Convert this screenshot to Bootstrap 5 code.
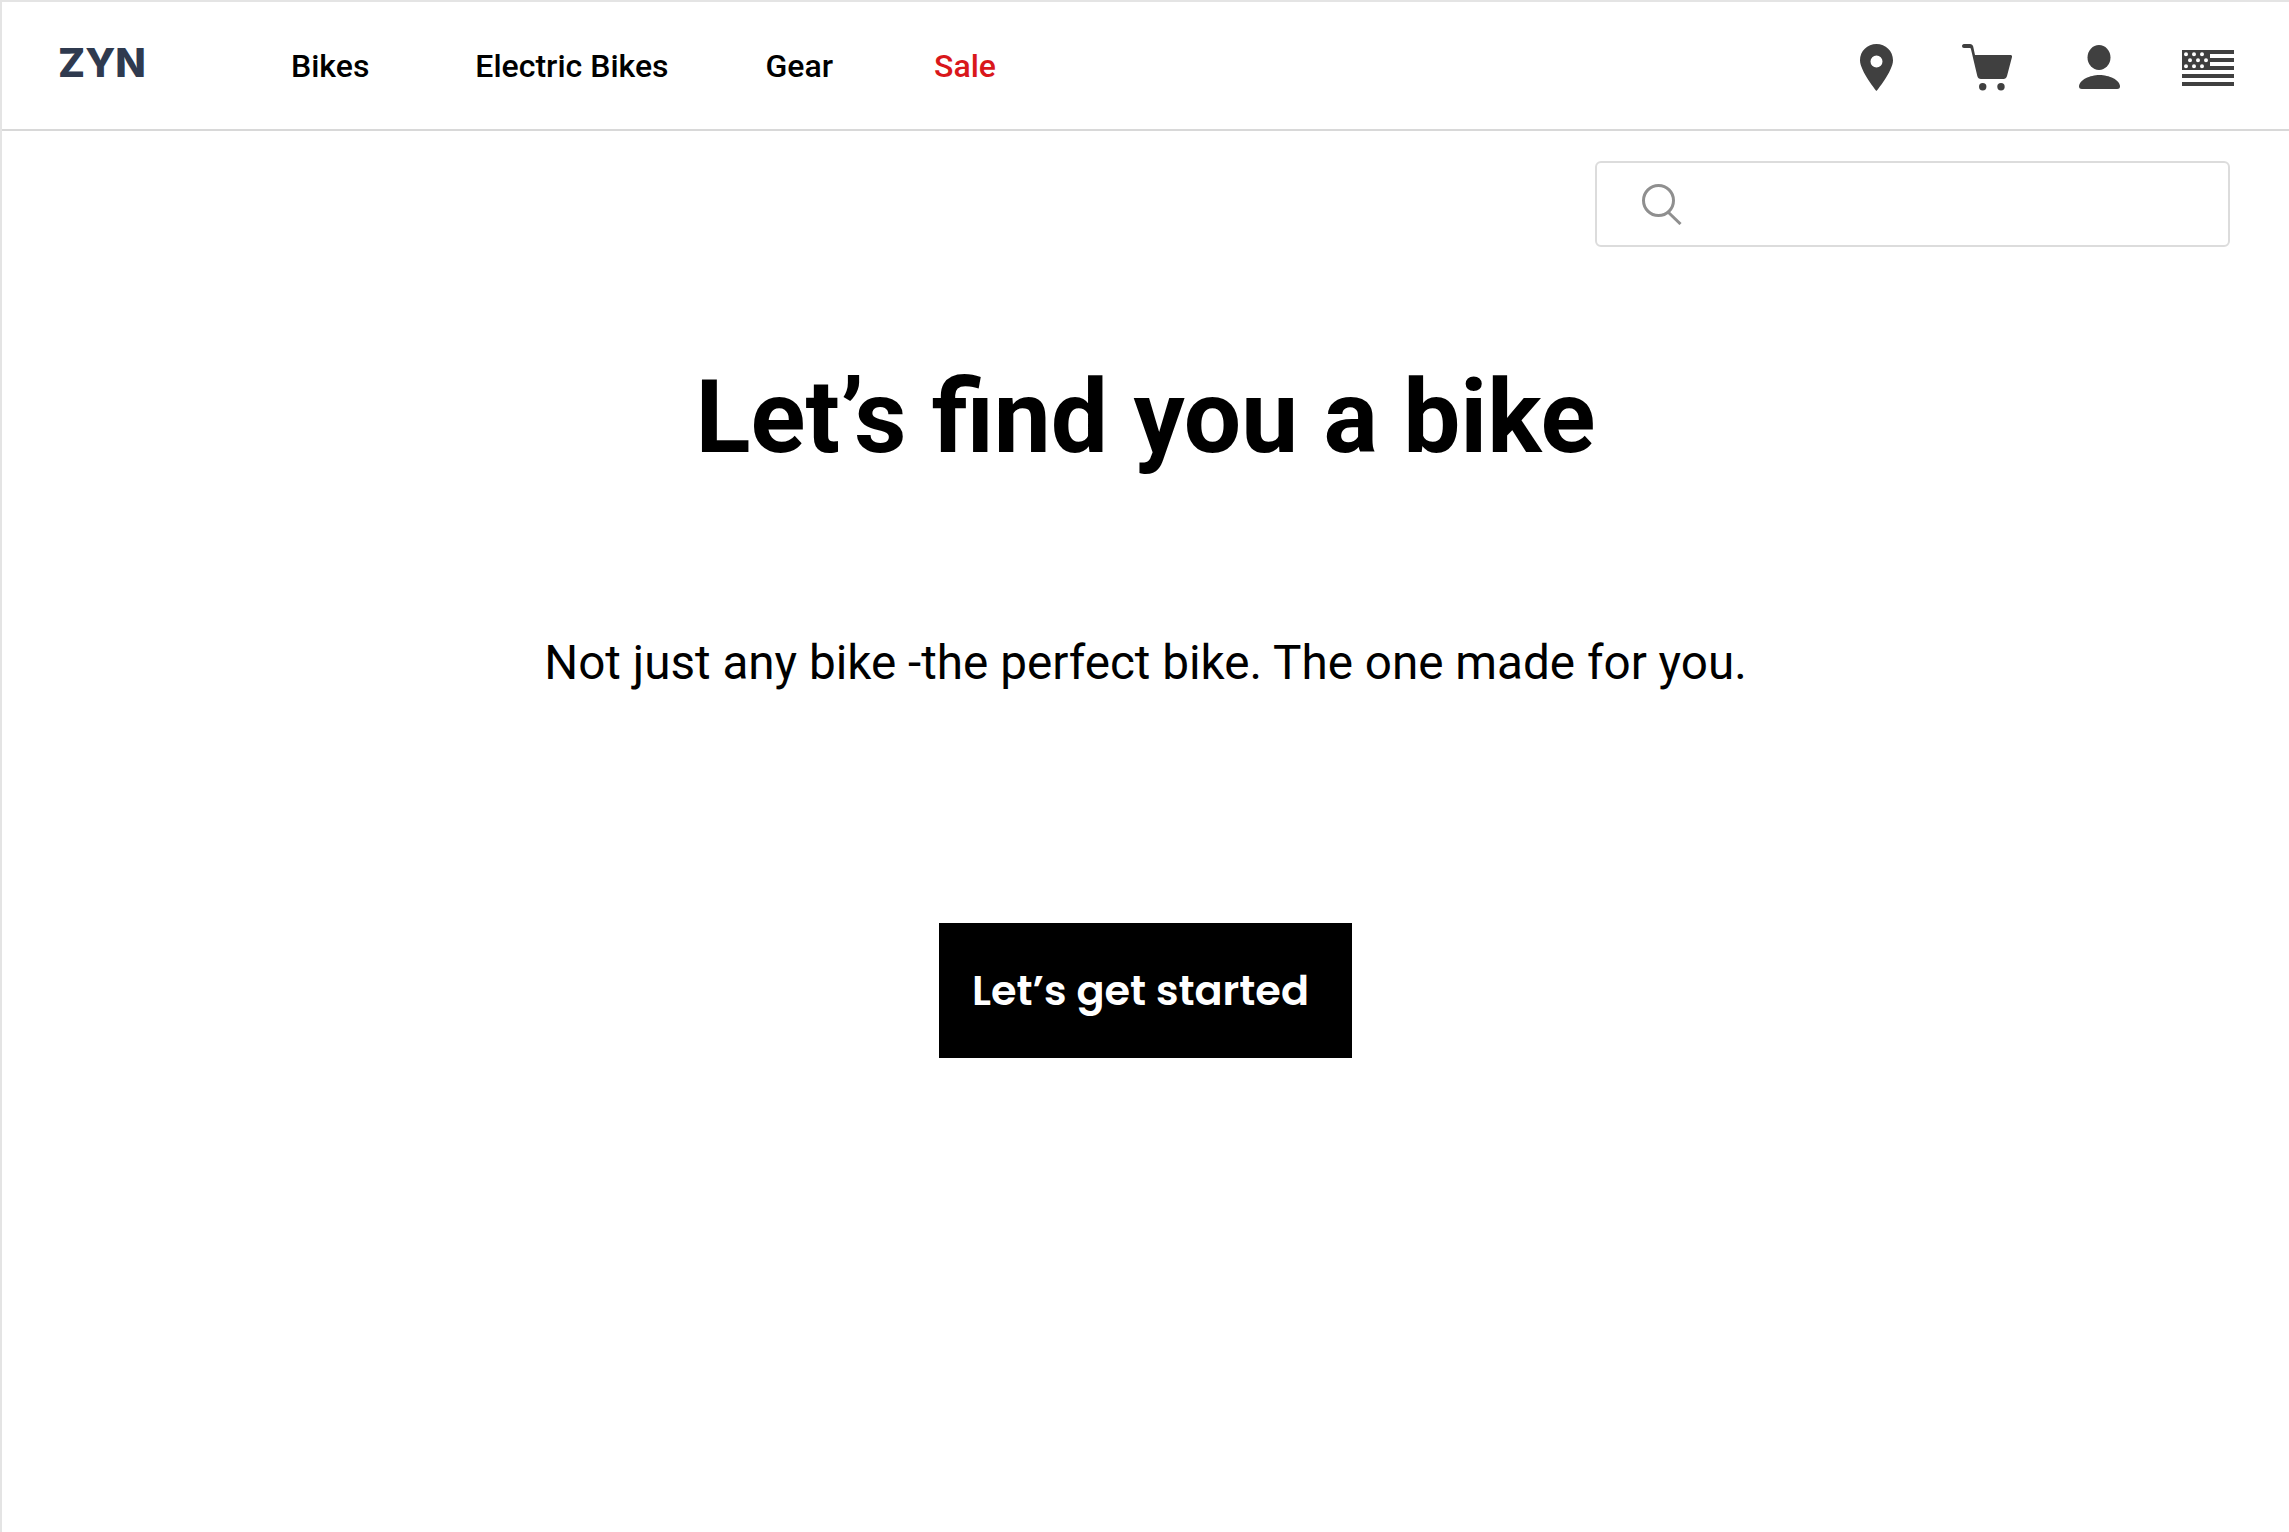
<!DOCTYPE html>
<html lang="en">

<head>
    <meta charset="UTF-8">
    <meta name="viewport" content="width=device-width, initial-scale=1.0">
    <title>ZYN</title>
    <link href="https://cdn.jsdelivr.net/npm/bootstrap@5.3.0/dist/css/bootstrap.min.css" rel="stylesheet">
    <style>
        body {
            background: #fff;
            font-family: Roboto, "Liberation Sans", sans-serif;
            color: #000;
            height: 1532px;
            overflow: hidden;
            border-left: 2px solid #e4e4e4;
        }

        .top-bar {
            height: 131px;
            border-top: 2px solid #e4e4e4;
            border-bottom: 2px solid #d8d8d8;
            padding: 3px 55px 0 56px;
        }

        .logo-text {
            width: 233px;
            font-family: Inter, "Liberation Sans", sans-serif;
            font-weight: 800;
            font-size: 40px;
            line-height: 1;
            color: #2f3a4f;
            text-decoration: none;
            margin-top: -8px;
        }

        .menu-row {
            margin-top: -2px;
        }

        .menu-link {
            font-size: 32px;
            font-weight: 500;
            color: #000;
            text-decoration: none;
            line-height: 1;
        }

        .menu-link.sale-link {
            color: #d9171b;
            margin-left: 101px;
        }

        .menu-link.wide-link {
            margin: 0 97px 0 106px;
        }

        .top-icons svg {
            display: block;
            fill: #404040;
        }

        .top-icons .cart-icon {
            margin: 0 67px 0 69px;
        }

        .top-icons .flag-icon {
            margin: 1px 0 0 62px;
        }

        .search-wrap {
            padding: 30px 59px 0 0;
        }

        .search-box {
            width: 635px;
            height: 86px;
            border: 2px solid #dcdcdc;
            border-radius: 6px;
            padding-left: 45px;
        }

        .search-box svg {
            flex: none;
        }

        .search-box input {
            border: 0;
            outline: 0;
            background: transparent;
            font-size: 28px;
            margin-left: 18px;
        }

        .hero-title {
            font-size: 101.700px;
            font-weight: 700;
            line-height: 1;
            margin: 120px 0 0;
        }

        .hero-sub {
            font-size: 47.650px;
            font-weight: 400;
            line-height: 1;
            margin: 171px 0 0;
        }

        .start-btn {
            width: 413px;
            height: 135px;
            margin-top: 236px;
            background: #000;
            color: #fff;
            border: 0;
            border-radius: 0;
            padding: 0 33px;
            font-family: Poppins, Inter, "Open Sans", sans-serif;
            font-weight: 600;
            font-size: 41.400px;
            line-height: 1;
            text-align: left;
            white-space: nowrap;
        }

        .start-btn:hover {
            background: #000;
            color: #fff;
        }
    </style>
</head>

<body>

    <!-- Header -->
    <nav class="top-bar d-flex align-items-center">
        <a class="logo-text" href="#">ZYN</a>
        <div class="menu-row d-flex align-items-center">
            <a class="menu-link" href="#">Bikes</a>
            <a class="menu-link wide-link" href="#">Electric Bikes</a>
            <a class="menu-link" href="#">Gear</a>
            <a class="menu-link sale-link" href="#">Sale</a>
        </div>
        <div class="top-icons d-flex align-items-center ms-auto">
            <!-- pin -->
            <svg width="33" height="47" viewBox="0 0 33 47">
                <path fill-rule="evenodd" d="M16.500 0C7.400 0 0 7.200 0 16.200 0 27 16.500 47 16.500 47S33 27 33 16.200C33 7.200 25.600 0 16.500 0Zm0 11.500a6 6 0 1 1 0 12 6 6 0 0 1 0-12Z"/>
            </svg>
            <!-- cart -->
            <svg class="cart-icon" width="50" height="47" viewBox="0 0 50 47">
                <path d="M2 0h6c1.600 0 2.800 1 3.200 2.600L13 11h35.500c1.200 0 1.800.9 1.500 2L45 32c-.5 2-1.800 3-3.500 3H19c-2 0-3.200-1-3.700-3L8.800 4.400 8 4H2C-.6 4-.6 0 2 0Z"/>
                <circle cx="20.700" cy="42.700" r="3.700"/>
                <circle cx="39" cy="42.700" r="3.700"/>
            </svg>
            <!-- person -->
            <svg width="41" height="44" viewBox="0 0 41 44">
                <ellipse cx="20" cy="12.500" rx="11.500" ry="12.500"/>
                <path d="M20.500 30C30 30 41 35 41 41.500 41 43.200 39.800 44 38.200 44H2.800C1.200 44 0 43.200 0 41.500 0 35 11 30 20.500 30Z"/>
            </svg>
            <!-- flag -->
            <svg class="flag-icon" width="52" height="36" viewBox="0 0 52 36">
                <path fill-rule="evenodd" d="M0 0h52v4H28v4h24v4H28v4h24v4H0V0Zm4 2.200a2 2 0 1 0 0 4 2 2 0 0 0 0-4Zm8 0a2 2 0 1 0 0 4 2 2 0 0 0 0-4Zm8 0a2 2 0 1 0 0 4 2 2 0 0 0 0-4Zm-12 6a2 2 0 1 0 0 4 2 2 0 0 0 0-4Zm8 0a2 2 0 1 0 0 4 2 2 0 0 0 0-4Zm8 0a2 2 0 1 0 0 4 2 2 0 0 0 0-4Zm-20 6a2 2 0 1 0 0 4 2 2 0 0 0 0-4Zm8 0a2 2 0 1 0 0 4 2 2 0 0 0 0-4Zm8 0a2 2 0 1 0 0 4 2 2 0 0 0 0-4Z"/>
                <rect y="24" width="52" height="4"/>
                <rect y="32" width="52" height="4"/>
            </svg>
        </div>
    </nav>

    <!-- Search -->
    <div class="search-wrap d-flex justify-content-end">
        <div class="search-box d-flex align-items-center">
            <svg width="40" height="41" viewBox="0 0 40 41" fill="none" stroke="#8f8f8f" stroke-width="3">
                <circle cx="16.500" cy="16.500" r="15"/>
                <path d="M26.500 28.500L38.500 40"/>
            </svg>
            <input type="text" aria-label="Search">
        </div>
    </div>

    <!-- Hero -->
    <main class="d-flex flex-column align-items-center">
        <h1 class="hero-title">Let’s find you a bike</h1>
        <p class="hero-sub">Not just any bike -the perfect bike. The one made for you.</p>
        <button type="button" class="btn start-btn">Let’s get started</button>
    </main>

</body>

</html>
